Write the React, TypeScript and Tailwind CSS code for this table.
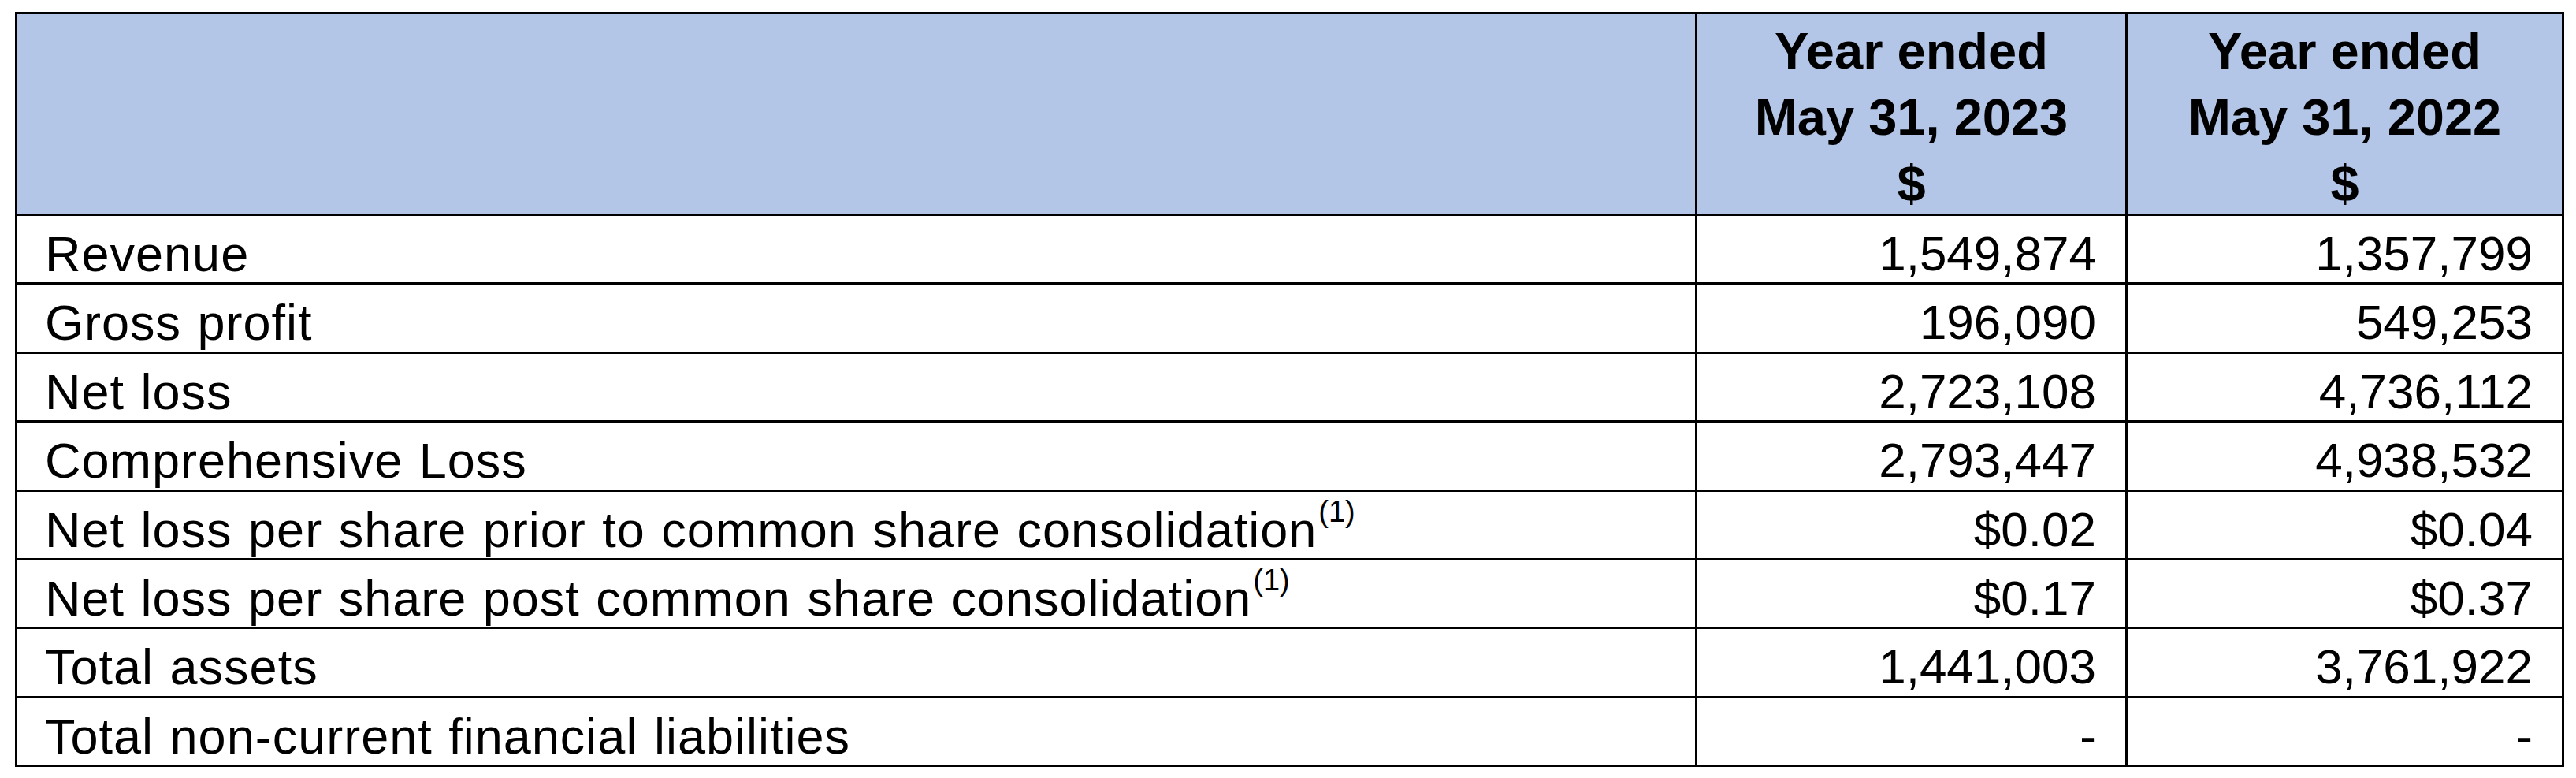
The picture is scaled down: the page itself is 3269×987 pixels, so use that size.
import React from "react";

type Row = { label: string; a: string; b: string; note?: boolean };

const rows: Row[] = [
  { label: "Revenue", a: "1,549,874", b: "1,357,799" },
  { label: "Gross profit", a: "196,090", b: "549,253" },
  { label: "Net loss", a: "2,723,108", b: "4,736,112" },
  { label: "Comprehensive Loss", a: "2,793,447", b: "4,938,532" },
  { label: "Net loss per share prior to common share consolidation", a: "$0.02", b: "$0.04", note: true },
  { label: "Net loss per share post common share consolidation", a: "$0.17", b: "$0.37", note: true },
  { label: "Total assets", a: "1,441,003", b: "3,761,922" },
  { label: "Total non-current financial liabilities", a: "-", b: "-" },
];

function HeaderCell({ year }: { year: string }) {
  return (
    <div className="border-l-[3px] border-black h-full pt-[5px] text-center font-bold text-[65px] leading-[84px] text-black whitespace-nowrap">
      <div>Year ended</div>
      <div>May 31, {year}</div>
      <div>$</div>
    </div>
  );
}

export default function App() {
  return (
    <div className="min-h-screen bg-white pl-[19px] pt-[15px] font-[Liberation_Sans,Arial,sans-serif] text-black">
      <div className="w-[3235px] border-[3px] border-black">
        <div className="grid grid-cols-[2129px_546px_554px] h-[253px] bg-[#b4c6e7]">
          <div />
          <HeaderCell year="2023" />
          <HeaderCell year="2022" />
        </div>
        {rows.map((r) => (
          <div
            key={r.label}
            className="grid grid-cols-[2129px_546px_554px] h-[87.375px] border-t-[3px] border-black leading-[72px]"
          >
            <div className="pl-[35px] pt-[12px] whitespace-nowrap text-[63px] tracking-[1px] [word-spacing:2px]">
              {r.label}
              {r.note && <sup className="text-[38px] top-[-32px] ml-[2px] tracking-normal">(1)</sup>}
            </div>
            <div className="border-l-[3px] border-black pr-[37px] pt-[12px] text-right whitespace-nowrap text-[62px]">{r.a}</div>
            <div className="border-l-[3px] border-black pr-[37px] pt-[12px] text-right whitespace-nowrap text-[62px]">{r.b}</div>
          </div>
        ))}
      </div>
    </div>
  );
}
